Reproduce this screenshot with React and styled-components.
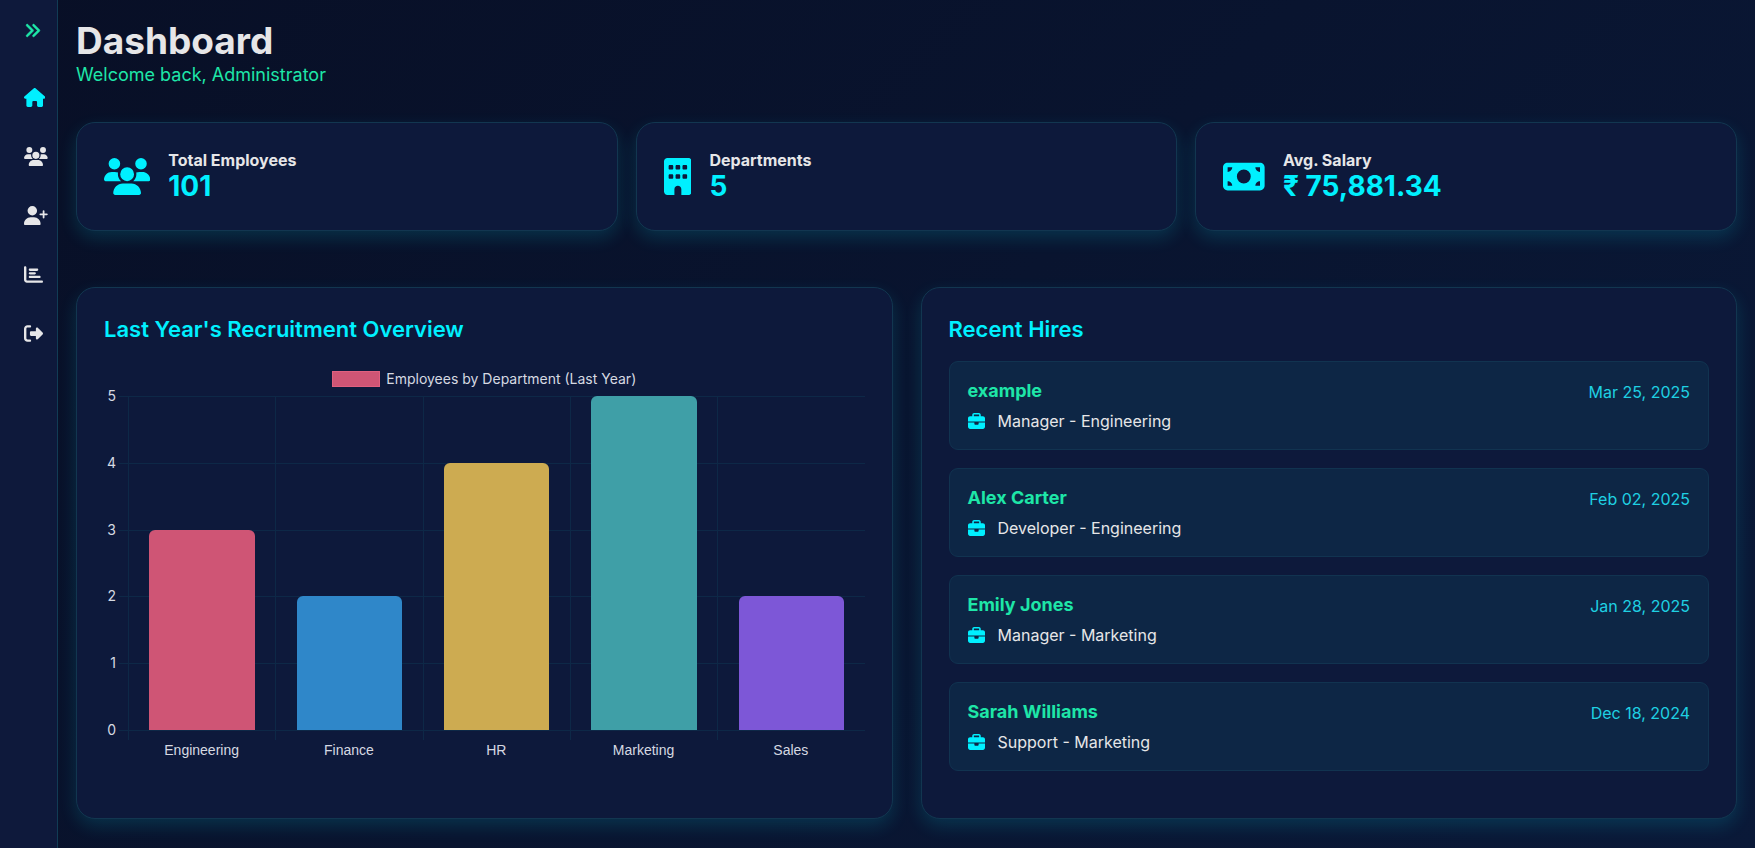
import React from "react";
import styled, { createGlobalStyle } from "styled-components";
import {
  FaAnglesRight,
  FaHouse,
  FaUsers,
  FaUserPlus,
  FaChartBar,
  FaRightFromBracket,
  FaBuilding,
  FaMoneyBill,
  FaBriefcase,
} from "react-icons/fa6";

const GlobalStyle = createGlobalStyle`
  *, *::before, *::after { box-sizing: border-box; }
  body {
    margin: 0;
    font-family: Inter, "Liberation Sans", sans-serif;
    color: #e6e6e8;
    background: #080f26;
  }
  h1, h2, h3, p, ul { margin: 0; padding: 0; }
  ul { list-style: none; }

  /* Icons keep a height of 1em and take their width from the view box. */
  svg { flex: none; height: 1em; }
  svg[viewBox="0 0 384 512"] { width: 0.75em; }
  svg[viewBox="0 0 576 512"] { width: 1.125em; }
  svg[viewBox="0 0 640 512"] { width: 1.25em; }
`;

const Shell = styled.div`
  display: flex;
  min-height: 100vh;
  background: linear-gradient(135deg, #080f26 0%, #0a1938 100%);
`;

const Sidebar = styled.aside`
  display: flex;
  flex-direction: column;
  flex: 0 0 58px;
  padding: 20px 0 0 24px;
  background: #0e193b;
  border-right: 1px solid #113c55;
`;

const ToggleButton = styled.button`
  display: flex;
  width: 20px;
  height: 20px;
  align-items: center;
  padding: 0;
  border: 0;
  background: none;
  color: #1ee6a8;
  font-size: 17px;
  cursor: pointer;

  svg {
    stroke: currentColor;
    stroke-width: 14px;
  }
`;

const NavList = styled.ul`
  display: flex;
  flex-direction: column;
  gap: 40px;
  margin-top: 48px;
`;

const NavLink = styled.a`
  display: flex;
  height: 19px;
  align-items: center;
  color: ${(p) => (p.$active ? "#00f0ff" : "#e6e6e8")};
  font-size: 19px;
`;

const Main = styled.main`
  flex: 1;
  min-width: 0;
  padding: 18px;
`;

const Title = styled.h1`
  font-size: 37px;
  line-height: 45px;
  font-weight: 700;
`;

const Subtitle = styled.p`
  font-size: 18px;
  line-height: 23px;
  color: #1ee6a8;
`;

const Panel = styled.section`
  background: #0d193b;
  border: 1px solid #123650;
  border-radius: 19px;
  box-shadow: 0 7px 18px rgba(0, 240, 255, 0.14);
`;

const StatRow = styled.div`
  display: grid;
  grid-template-columns: repeat(3, 1fr);
  gap: 18px;
  margin-top: 36px;
`;

const StatCard = styled(Panel)`
  display: flex;
  align-items: center;
  gap: 18px;
  padding: 27px;
`;

const StatIcon = styled.span`
  display: flex;
  color: #00f0ff;
  font-size: 37px;
`;

const StatLabel = styled.h3`
  font-size: 16px;
  line-height: 20px;
  font-weight: 700;
`;

const StatValue = styled.p`
  font-size: 28px;
  line-height: 33px;
  font-weight: 700;
  color: #00f0ff;
`;

const PanelRow = styled.div`
  display: grid;
  grid-template-columns: repeat(2, 1fr);
  gap: 28px;
  margin-top: 56px;
`;

const ContentPanel = styled(Panel)`
  padding: 27px 27px 47px;
`;

const PanelTitle = styled.h2`
  font-size: 22px;
  line-height: 28px;
  font-weight: 600;
  color: #00f0ff;
`;

const Legend = styled.div`
  display: flex;
  justify-content: center;
  align-items: center;
  gap: 6px;
  margin-top: 27px;
  font-size: 14px;
  line-height: 17px;
  color: #d6d9e2;
`;

const Swatch = styled.span`
  width: 48px;
  height: 16px;
  background: #cf5575;
  border: 1px solid #e0607f;
`;

const Chart = styled.div`
  display: grid;
  grid-template-columns: 15px 1fr;
  margin-top: 9px;
  font-size: 14px;
  line-height: 16px;
  color: #d6d9e2;
`;

const ValueAxis = styled.div`
  display: flex;
  flex-direction: column;
  justify-content: space-between;
  height: 350px;
  margin: -8px 0;
  padding-right: 3px;
  text-align: right;
`;

const Plot = styled.div`
  display: grid;
  grid-template-rows: 100%;
  height: 335px;
`;

const GridLines = styled.div`
  display: flex;
  flex-direction: column;
  grid-area: 1 / 1;
  border-bottom: 1px solid #0d2847;
`;

const GridLine = styled.div`
  flex: 1;
  border-top: 1px solid #0d2847;
`;

const Bars = styled.div`
  display: grid;
  grid-template-columns: repeat(5, 1fr);
  grid-area: 1 / 1;
  height: 344px;
  margin-left: 9px;
`;

const BarCell = styled.div`
  display: flex;
  justify-content: center;
  align-items: flex-end;
  padding-bottom: 10px;
  border-left: 1px solid #0d2847;
`;

const Bar = styled.div`
  width: 72%;
  height: ${(p) => p.$value * 20}%;
  background: ${(p) => p.$color};
  border-radius: 6px 6px 0 0;
`;

const CategoryAxis = styled.div`
  display: grid;
  grid-template-columns: repeat(5, 1fr);
  grid-column: 2;
  margin: 11px 0 0 9px;
  font-family: "Liberation Sans", Arial, sans-serif;
  text-align: center;
`;

const HireList = styled.ul`
  display: flex;
  flex-direction: column;
  gap: 18px;
  margin-top: 18px;
`;

const HireCard = styled.li`
  display: flex;
  justify-content: space-between;
  height: 89px;
  padding: 18px;
  background: #0d2645;
  border: 1px solid #113350;
  border-radius: 9px;
`;

const HireName = styled.h3`
  font-size: 18px;
  line-height: 22px;
  font-weight: 700;
  color: #1ee6a8;
`;

const HireRole = styled.p`
  display: flex;
  align-items: center;
  gap: 13px;
  margin-top: 9px;
  font-size: 16px;
  line-height: 21px;

  svg {
    width: 17px;
    height: 17px;
    color: #00f0ff;
  }
`;

const HireDate = styled.time`
  font-size: 16px;
  line-height: 24px;
  color: #1fd0e2;
`;

const navItems = [
  { label: "Dashboard", icon: FaHouse, active: true },
  { label: "Employees", icon: FaUsers },
  { label: "Add employee", icon: FaUserPlus },
  { label: "Reports", icon: FaChartBar },
  { label: "Log out", icon: FaRightFromBracket },
];

const stats = [
  { label: "Total Employees", value: "101", icon: FaUsers },
  { label: "Departments", value: "5", icon: FaBuilding },
  { label: "Avg. Salary", value: "₹ 75,881.34", icon: FaMoneyBill },
];

const departments = [
  { name: "Engineering", count: 3, color: "#cf5575" },
  { name: "Finance", count: 2, color: "#2f87c9" },
  { name: "HR", count: 4, color: "#cdab51" },
  { name: "Marketing", count: 5, color: "#3f9fa7" },
  { name: "Sales", count: 2, color: "#7d57d7" },
];

const hires = [
  { name: "example", role: "Manager - Engineering", date: "Mar 25, 2025" },
  { name: "Alex Carter", role: "Developer - Engineering", date: "Feb 02, 2025" },
  { name: "Emily Jones", role: "Manager - Marketing", date: "Jan 28, 2025" },
  { name: "Sarah Williams", role: "Support - Marketing", date: "Dec 18, 2024" },
];

export default function App() {
  return (
    <>
      <GlobalStyle />
      <Shell>
        <Sidebar>
          <ToggleButton type="button" aria-label="Expand menu">
            <FaAnglesRight />
          </ToggleButton>
          <nav>
            <NavList>
              {navItems.map(({ label, icon: Icon, active }) => (
                <li key={label}>
                  <NavLink href="#" aria-label={label} $active={active}>
                    <Icon />
                  </NavLink>
                </li>
              ))}
            </NavList>
          </nav>
        </Sidebar>
        <Main>
          <header>
            <Title>Dashboard</Title>
            <Subtitle>Welcome back, Administrator</Subtitle>
          </header>
          <StatRow>
            {stats.map(({ label, value, icon: Icon }) => (
              <StatCard key={label}>
                <StatIcon>
                  <Icon />
                </StatIcon>
                <div>
                  <StatLabel>{label}</StatLabel>
                  <StatValue>{value}</StatValue>
                </div>
              </StatCard>
            ))}
          </StatRow>
          <PanelRow>
            <ContentPanel>
              <PanelTitle>Last Year's Recruitment Overview</PanelTitle>
              <Legend>
                <Swatch />
                Employees by Department (Last Year)
              </Legend>
              <Chart>
                <ValueAxis>
                  {[5, 4, 3, 2, 1, 0].map((n) => (
                    <span key={n}>{n}</span>
                  ))}
                </ValueAxis>
                <Plot>
                  <GridLines>
                    {[5, 4, 3, 2, 1].map((n) => (
                      <GridLine key={n} />
                    ))}
                  </GridLines>
                  <Bars>
                    {departments.map((d) => (
                      <BarCell key={d.name}>
                        <Bar $value={d.count} $color={d.color} />
                      </BarCell>
                    ))}
                  </Bars>
                </Plot>
                <CategoryAxis>
                  {departments.map((d) => (
                    <span key={d.name}>{d.name}</span>
                  ))}
                </CategoryAxis>
              </Chart>
            </ContentPanel>
            <ContentPanel>
              <PanelTitle>Recent Hires</PanelTitle>
              <HireList>
                {hires.map((h) => (
                  <HireCard key={h.name}>
                    <div>
                      <HireName>{h.name}</HireName>
                      <HireRole>
                        <FaBriefcase />
                        {h.role}
                      </HireRole>
                    </div>
                    <HireDate>{h.date}</HireDate>
                  </HireCard>
                ))}
              </HireList>
            </ContentPanel>
          </PanelRow>
        </Main>
      </Shell>
    </>
  );
}
